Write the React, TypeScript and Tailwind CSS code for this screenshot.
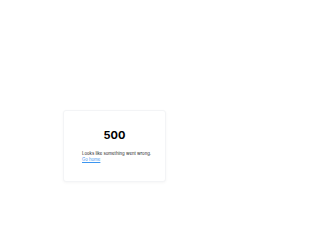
export default function App() {
  return (
    <div className="min-h-[250px] bg-white pl-[63px] pt-[110px] font-['Inter',sans-serif]">
      <div className="flex h-[72px] w-[103px] flex-col rounded-[3px] border border-[#f3f4f6] bg-white px-[18px] pt-[17px] shadow-[0_1px_3px_rgba(0,0,0,0.04)]">
        <h1 className="text-center text-[11px] font-bold leading-[14px] text-black">500</h1>
        <p className="mt-[9px] whitespace-nowrap text-[4.3px] leading-[6px] text-[#222]">
          Looks like something went wrong.
        </p>
        <a href="#" className="text-[4.3px] leading-[5px] text-[#3b95f0] underline decoration-[#3b95f0]">
          Go home
        </a>
      </div>
    </div>
  );
}
